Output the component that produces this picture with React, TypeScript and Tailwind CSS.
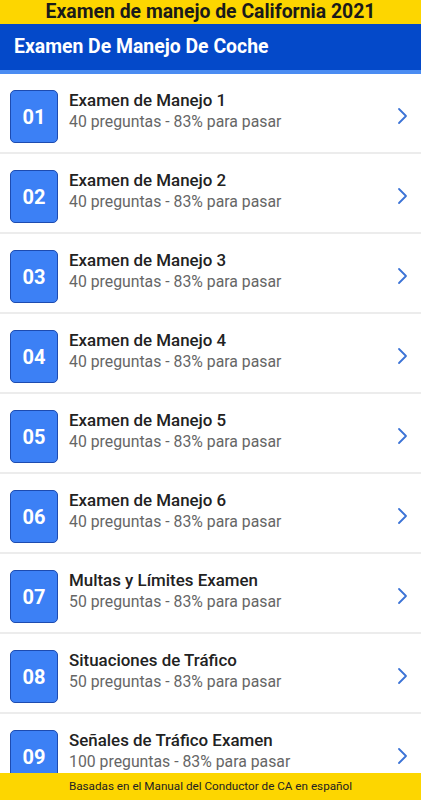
const exams = [
  { n: "01", title: "Examen de Manejo 1", sub: "40 preguntas - 83% para pasar" },
  { n: "02", title: "Examen de Manejo 2", sub: "40 preguntas - 83% para pasar" },
  { n: "03", title: "Examen de Manejo 3", sub: "40 preguntas - 83% para pasar" },
  { n: "04", title: "Examen de Manejo 4", sub: "40 preguntas - 83% para pasar" },
  { n: "05", title: "Examen de Manejo 5", sub: "40 preguntas - 83% para pasar" },
  { n: "06", title: "Examen de Manejo 6", sub: "40 preguntas - 83% para pasar" },
  { n: "07", title: "Multas y Límites Examen", sub: "50 preguntas - 83% para pasar" },
  { n: "08", title: "Situaciones de Tráfico", sub: "50 preguntas - 83% para pasar" },
  { n: "09", title: "Señales de Tráfico Examen", sub: "100 preguntas - 83% para pasar" },
];

function Chevron() {
  return (
    <svg width="12" height="20" viewBox="0 0 12 20" className="shrink-0">
      <path d="M3 3 L10 10 L3 17" fill="none" stroke="#3b73d6" strokeWidth="1.8" strokeLinecap="round" strokeLinejoin="round" />
    </svg>
  );
}

export default function App() {
  return (
    <div className="h-[800px] w-[421px] flex flex-col bg-white overflow-hidden font-['Roboto',sans-serif]">
      {/* top banner */}
      <div className="h-[24px] shrink-0 bg-[#fdd600] flex items-center justify-center">
        <p className="text-[19.4px] font-bold text-[#1a1a1a] leading-none">Examen de manejo de California 2021</p>
      </div>

      {/* app bar */}
      <div className="h-[46px] shrink-0 bg-[#0449c9] flex items-center px-[14px]">
        <h1 className="text-[19.4px] font-bold text-white leading-none">Examen De Manejo De Coche</h1>
      </div>
      <div className="h-[4px] shrink-0 bg-[#4a8cf2]" />

      {/* list */}
      <div className="flex-1 overflow-hidden">
        {exams.map((e) => (
          <div key={e.n} className="h-[80px] flex items-start pt-[16px] pl-[10px] pr-[13px] border-b-[2px] border-[#ececec]">
            <div className="w-[48px] h-[53px] shrink-0 rounded-[5px] bg-[#3c80f5] border border-[#1d4bb0] flex items-center justify-center">
              <span className="text-white font-bold text-[20px] leading-none">{e.n}</span>
            </div>
            <div className="flex-1 ml-[11px] -mt-[1px]">
              <p className="text-[16.9px] font-medium text-[#222] leading-[22px]">{e.title}</p>
              <p className="text-[15.8px] text-[#666] leading-[22px]">{e.sub}</p>
            </div>
            <div className="self-start mt-[16px]">
              <Chevron />
            </div>
          </div>
        ))}
      </div>

      {/* footer */}
      <div className="h-[27px] shrink-0 bg-[#fdd600] flex items-center justify-center">
        <p className="text-[11.7px] text-[#222] leading-none">Basadas en el Manual del Conductor de CA en español</p>
      </div>
    </div>
  );
}
